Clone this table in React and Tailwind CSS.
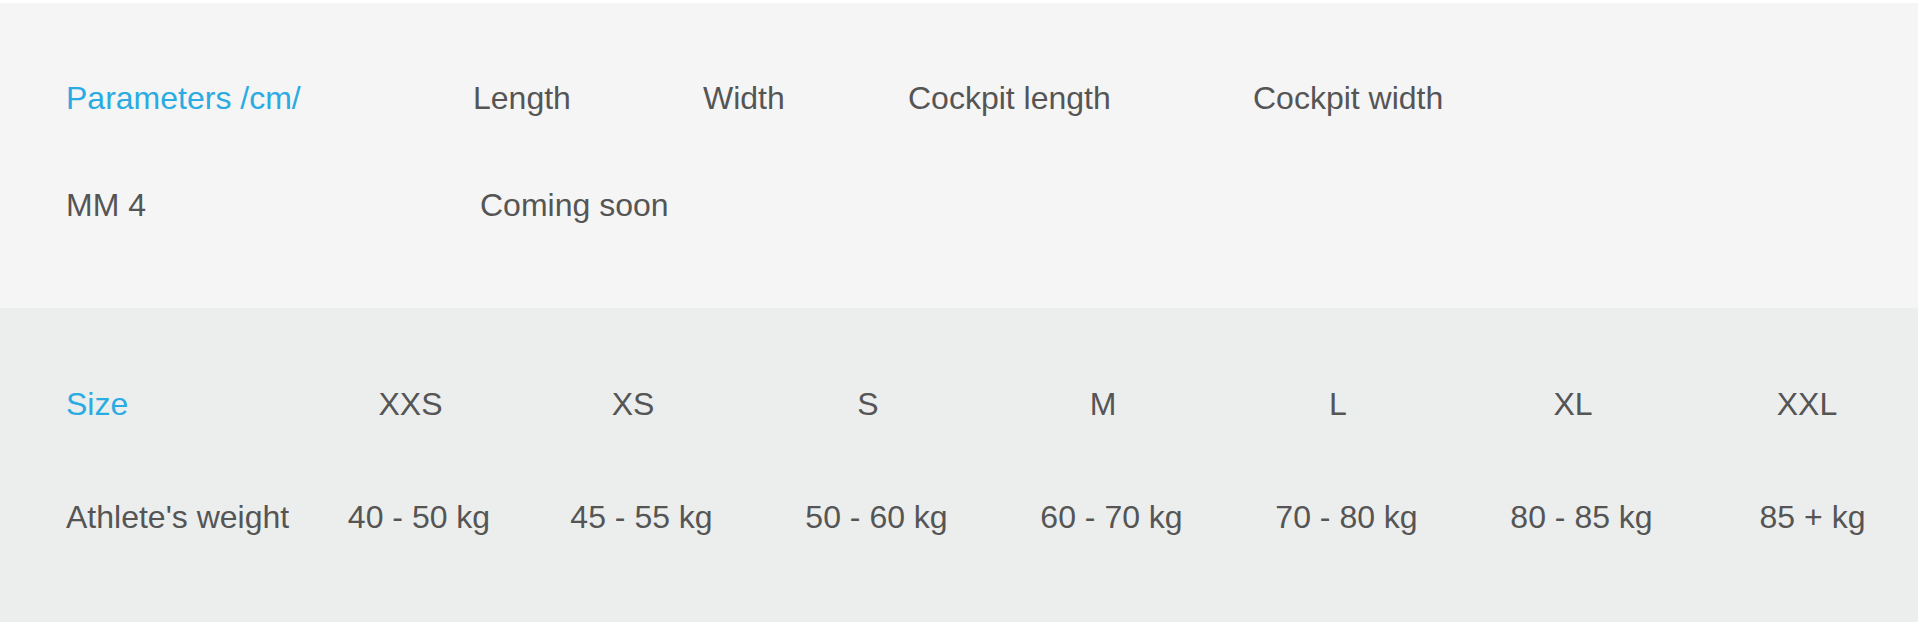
import React from "react";

const sizes = ["XXS", "XS", "S", "M", "L", "XL", "XXL"];
const weights = ["40 - 50 kg", "45 - 55 kg", "50 - 60 kg", "60 - 70 kg", "70 - 80 kg", "80 - 85 kg", "85 + kg"];

export default function App() {
  return (
    <div className="w-[1920px] h-[625px] bg-white pt-[3px] pr-[2px] font-['Liberation_Sans',Arial,sans-serif] text-[32px] leading-[36px] text-[#555555]">
      <div className="bg-[#f5f5f5] h-[305px] pt-[77px] pl-[66px]">
        <div className="grid grid-cols-[407px_230px_205px_345px_1fr]">
          <div className="text-[#2aabe2] whitespace-nowrap">Parameters /cm/</div>
          <div className="whitespace-nowrap">Length</div>
          <div className="whitespace-nowrap">Width</div>
          <div className="whitespace-nowrap">Cockpit length</div>
          <div className="whitespace-nowrap">Cockpit width</div>
        </div>
        <div className="grid grid-cols-[407px_1fr] mt-[71px]">
          <div className="whitespace-nowrap">MM 4</div>
          <div className="whitespace-nowrap pl-[7px]">Coming soon</div>
        </div>
      </div>
      <div className="bg-[#eceeed] h-[314px] pt-[78px] pl-[66px]">
        <div className="grid grid-cols-[248px_210px_235px_235px_235px_235px_235px_227px]">
          <div className="text-[#2aabe2] whitespace-nowrap">Size</div>
          {sizes.map((s, i) => (
            <div key={s} className={i === 6 ? "text-center whitespace-nowrap pr-[11px]" : "text-center whitespace-nowrap pr-[17px]"}>
              {s}
            </div>
          ))}
        </div>
        <div className="grid grid-cols-[248px_210px_235px_235px_235px_235px_235px_227px] mt-[77px]">
          <div className="whitespace-nowrap">Athlete's weight</div>
          {weights.map((w) => (
            <div key={w} className="text-center whitespace-nowrap">
              {w}
            </div>
          ))}
        </div>
      </div>
    </div>
  );
}
